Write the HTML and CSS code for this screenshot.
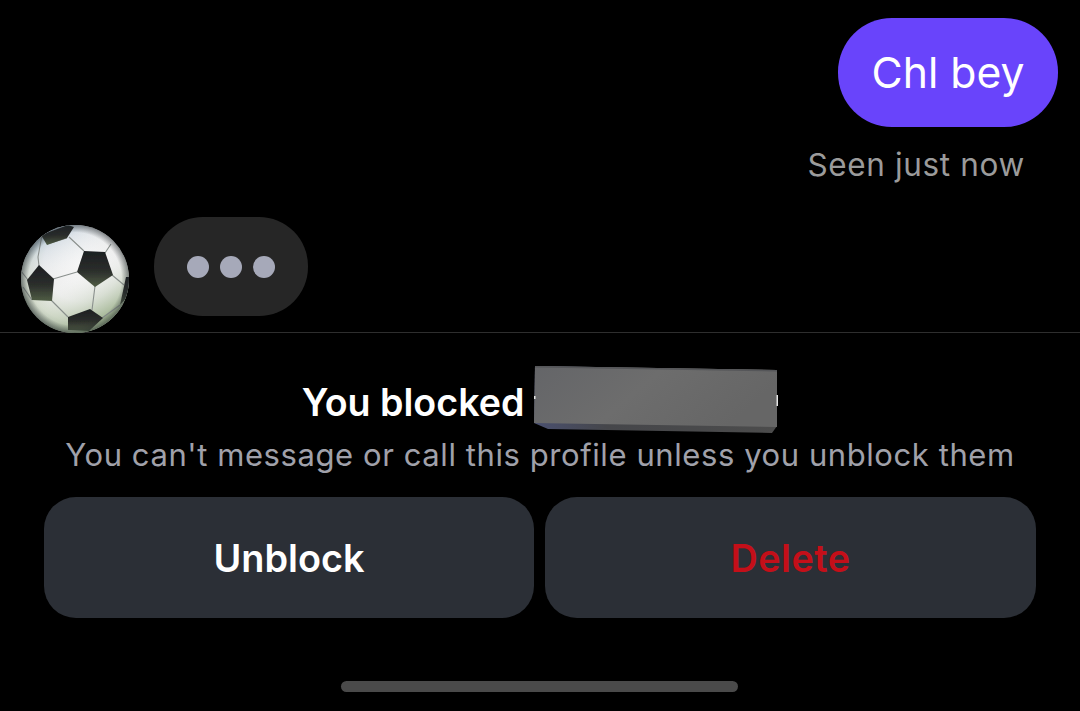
FILE: index.html
```html
<!DOCTYPE html>
<html lang="en">
<head>
<meta charset="utf-8">
<title>Chat</title>
<link rel="stylesheet" href="styles.css">
</head>
<body>
<main class="screen">
  <section class="thread">
    <div class="outgoing">
      <div class="bubble-out">Chl bey</div>
      <div class="seen">Seen just now</div>
    </div>
    <div class="incoming">
      <svg class="avatar" viewBox="0 0 108 108" aria-hidden="true">
        <defs>
          <radialGradient id="ballFill" cx="0.56" cy="0.36" r="0.7">
            <stop offset="0" stop-color="#f6f6f6"/>
            <stop offset="0.5" stop-color="#eeeeee"/>
            <stop offset="0.78" stop-color="#d3dacb"/>
            <stop offset="1" stop-color="#8c9c88"/>
          </radialGradient>
          <linearGradient id="ballTint" x1="0" y1="0" x2="0.55" y2="1">
            <stop offset="0" stop-color="#5f8fbb" stop-opacity="0.95"/>
            <stop offset="0.28" stop-color="#a9c0d4" stop-opacity="0.25"/>
            <stop offset="0.55" stop-color="#ffffff" stop-opacity="0"/>
            <stop offset="1" stop-color="#8ea67c" stop-opacity="0.75"/>
          </linearGradient>
          <radialGradient id="ballRim" cx="0.5" cy="0.5" r="0.5">
            <stop offset="0.86" stop-color="#20262a" stop-opacity="0"/>
            <stop offset="1" stop-color="#20262a" stop-opacity="0.5"/>
          </radialGradient>
          <linearGradient id="patch" x1="0" y1="0" x2="0" y2="1">
            <stop offset="0" stop-color="#1c1e21"/>
            <stop offset="0.55" stop-color="#2b2e2b"/>
            <stop offset="1" stop-color="#4f5c44"/>
          </linearGradient>
          <filter id="soft" x="-10%" y="-10%" width="120%" height="120%">
            <feGaussianBlur stdDeviation="0.5"/>
          </filter>
          <clipPath id="ballClip"><circle cx="54" cy="54" r="54"/></clipPath>
        </defs>
        <g clip-path="url(#ballClip)">
          <rect width="108" height="108" fill="url(#ballFill)"/>
          <rect width="108" height="108" fill="url(#ballTint)"/>
          <g filter="url(#soft)">
            <g fill="none" stroke="#8a908d" stroke-width="1.1">
              <path d="M48 12 63 26M90 19 84 28M21 10 17 32 18 41M32 54 56 47M74 61 71 85M91 50 103 60M99 80 81 93M30 75 47 92M0 46 7 55M46 13 26 19M11 75 2 62"/>
            </g>
            <g fill="url(#patch)">
              <path d="M20 10 47 0 53 2 46 13 26 20Z"/>
              <path d="M63 26 84 27 92 50 74 62 56 47Z"/>
              <path d="M18 40 33 54 31 76 11 75 6 55Z"/>
              <path d="M47 92 69 84 82 93 68 106 47 105Z"/>
              <path d="M105 52 99 80 108 70 108 52Z"/>
            </g>
          </g>
          <rect width="108" height="108" fill="url(#ballRim)"/>
        </g>
      </svg>
      <div class="typing">
        <span class="dot"></span><span class="dot"></span><span class="dot"></span>
      </div>
    </div>
  </section>
  <section class="blocked">
    <h1 class="blocked-title">
      <span>You blocked</span>
      <svg class="redaction" viewBox="0 0 244 67" aria-hidden="true">
        <defs>
          <linearGradient id="redactEdge" x1="0" y1="0" x2="1" y2="0">
            <stop offset="0" stop-color="#4a5070"/>
            <stop offset="0.3" stop-color="#45464a"/>
            <stop offset="1" stop-color="#4c4c4c"/>
          </linearGradient>
          <linearGradient id="redactFace" x1="0" y1="0" x2="1" y2="0.3">
            <stop offset="0" stop-color="#646568"/>
            <stop offset="0.5" stop-color="#6d6d6d"/>
            <stop offset="1" stop-color="#666666"/>
          </linearGradient>
        </defs>
        <path d="M1 0 243 4 243 60 238 67 14 63 0 57Z" fill="url(#redactEdge)"/>
        <path d="M1 0 243 4 243 61 0 57Z" fill="url(#redactFace)"/>
        <path d="M1 0 243 4 243 5.5 1 1.5Z" fill="#555659"/>
        <path d="M0 30H1.5V33H0ZM242.500 29H244V40H242.500Z" fill="#e6e6e6"/>
      </svg>
    </h1>
    <p class="blocked-note">You can't message or call this profile unless you unblock them</p>
    <div class="actions">
      <button class="action action-primary" type="button">Unblock</button>
      <button class="action action-danger" type="button">Delete</button>
    </div>
  </section>
  <div class="home-bar"></div>
</main>
</body>
</html>
```
FILE: styles.css
```css
* { box-sizing: border-box; }
html, body { margin: 0; height: 100%; background: #000; }
body { font-family: Inter, "Liberation Sans", sans-serif; overflow: hidden; }

.screen {
  width: 1080px;
  height: 711px;
  display: flex;
  flex-direction: column;
  background: #000;
}

.thread {
  height: 333px;
  padding-top: 18px;
  display: flex;
  flex-direction: column;
  border-bottom: 1px solid #2e2e2e;
}

.outgoing {
  display: flex;
  flex-direction: column;
  align-items: flex-end;
}

.bubble-out {
  width: 220px;
  height: 109px;
  margin-right: 22px;
  border-radius: 54px;
  background: #6944fb;
  color: #fff;
  font-size: 42.7px;
  line-height: 109px;
  text-align: center;
}

.seen {
  margin-top: 19px;
  margin-right: 55px;
  color: #9b9b9b;
  font-size: 31.5px;
  line-height: 38px;
  letter-spacing: 0.65px;
}

.incoming {
  margin-top: 33px;
  margin-left: 21px;
  display: flex;
  align-items: flex-start;
  gap: 25px;
}

.avatar {
  width: 108px;
  height: 108px;
  margin-top: 8px;
  flex: none;
}

.typing {
  width: 154px;
  height: 99px;
  border-radius: 49px;
  background: #262626;
  display: flex;
  align-items: center;
  justify-content: center;
  gap: 11px;
}

.dot {
  width: 22px;
  height: 22px;
  border-radius: 50%;
  background: #a6a9b9;
}

.blocked {
  padding: 33px 44px 0;
  display: flex;
  flex-direction: column;
  align-items: center;
}

.blocked-title {
  margin: 0;
  height: 70px;
  display: flex;
  align-items: flex-start;
  gap: 10px;
  color: #fff;
  font-size: 37.6px;
  font-weight: 600;
  line-height: 74px;
}

.redaction {
  width: 244px;
  height: 67px;
  flex: none;
}

.blocked-note {
  margin: 0;
  color: #a0a1aa;
  font-size: 31px;
  line-height: 38px;
  letter-spacing: 0.58px;
  white-space: nowrap;
}

.actions {
  margin-top: 23px;
  width: 100%;
  display: grid;
  grid-template-columns: 490px 491px;
  gap: 11px;
}

.action {
  height: 121px;
  border: 0;
  border-radius: 32px;
  background: #2b2f36;
  font-family: inherit;
  font-size: 37.8px;
  font-weight: 600;
}

.action-primary { color: #fff; }
.action-danger { color: #c40f19; letter-spacing: 0.5px; }

.home-bar {
  width: 397px;
  height: 11px;
  margin: 63px 0 0 341px;
  border-radius: 6px;
  background: #4a4a4a;
}
```
